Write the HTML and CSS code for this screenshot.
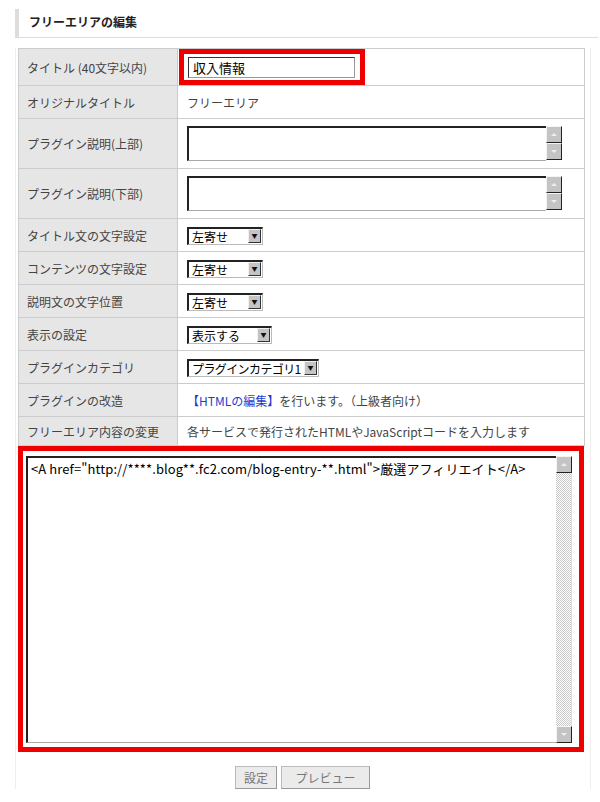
FILE: index.html
```html
<!DOCTYPE html>
<html lang="ja">
<head>
  <meta charset="UTF-8" />
  <title>フリーエリアの編集</title>
  <link rel="stylesheet" href="styles.css">
</head>
<body>
  <h2 class="page-title">フリーエリアの編集</h2>

  <div class="frame">
    <table class="form-table">
      <tr class="row-title">
        <th>タイトル (40文字以内)</th>
        <td class="tight">
          <span class="mark">
            <input type="text" class="title-input" value="収入情報" />
          </span>
        </td>
      </tr>
      <tr class="row-std">
        <th>オリジナルタイトル</th>
        <td>フリーエリア</td>
      </tr>
      <tr class="row-memo">
        <th>プラグイン説明(上部)</th>
        <td>
          <div class="memo">
            <textarea></textarea>
            <div class="scroll">
              <span class="sbtn up"></span>
              <span class="sbtn down"></span>
            </div>
          </div>
        </td>
      </tr>
      <tr class="row-memo">
        <th>プラグイン説明(下部)</th>
        <td>
          <div class="memo">
            <textarea></textarea>
            <div class="scroll">
              <span class="sbtn up"></span>
              <span class="sbtn down"></span>
            </div>
          </div>
        </td>
      </tr>
      <tr class="row-std">
        <th>タイトル文の文字設定</th>
        <td><span class="select w-align"><select><option>左寄せ</option></select></span></td>
      </tr>
      <tr class="row-std">
        <th>コンテンツの文字設定</th>
        <td><span class="select w-align"><select><option>左寄せ</option></select></span></td>
      </tr>
      <tr class="row-std">
        <th>説明文の文字位置</th>
        <td><span class="select w-align"><select><option>左寄せ</option></select></span></td>
      </tr>
      <tr class="row-std">
        <th>表示の設定</th>
        <td><span class="select w-show"><select><option>表示する</option></select></span></td>
      </tr>
      <tr class="row-std">
        <th>プラグインカテゴリ</th>
        <td><span class="select w-cat"><select><option>プラグインカテゴリ1</option></select></span></td>
      </tr>
      <tr class="row-std">
        <th>プラグインの改造</th>
        <td><a href="#" class="edit-link">【HTMLの編集】</a>を行います。（上級者向け）</td>
      </tr>
      <tr class="row-last">
        <th>フリーエリア内容の変更</th>
        <td>各サービスで発行されたHTMLやJavaScriptコードを入力します</td>
      </tr>
    </table>

    <div class="code-box">
      <div class="code-area">
        <textarea>&lt;A href=&quot;http://****.blog**.fc2.com/blog-entry-**.html&quot;&gt;厳選アフィリエイト&lt;/A&gt;</textarea>
        <div class="scroll track">
          <span class="sbtn up"></span>
          <span class="rail"></span>
          <span class="sbtn down"></span>
        </div>
      </div>
    </div>

    <div class="actions">
      <button class="btn">設定</button>
      <button class="btn btn-wide">プレビュー</button>
    </div>
  </div>
</body>
</html>
```

FILE: styles.css
```css
:root {
  --text: #444444;
  --line: #cccccc;
  --label-bg: #e6e6e6;
  --mark: #ee0000;
  --link: #1a3fd0;
  --btn-face: #c4c4c4;
}

body {
  margin: 0;
  background: #ffffff;
  color: var(--text);
  font-family: "Noto Sans CJK JP", "Liberation Sans", sans-serif;
  font-size: 12px;
}

.page-title {
  margin: 9px 2px 0 15px;
  height: 28px;
  line-height: 25px;
  padding-left: 10px;
  border-left: 4px solid #dddddd;
  border-bottom: 1px solid #dddddd;
  font-size: 12px;
  font-weight: bold;
  color: #222222;
}

.frame {
  margin: 10px 9px 0 15px;
  padding: 0 5px 0 2px;
  border-left: 1px solid #eeeeee;
  border-right: 1px solid #eeeeee;
}

.form-table {
  width: 567px;
  border-collapse: collapse;
}

.form-table th,
.form-table td {
  border: 1px solid var(--line);
  text-align: left;
  vertical-align: middle;
  font-weight: normal;
  padding: 0 9px;
}

.form-table th {
  width: 141px;
  padding-left: 8px;
  background: var(--label-bg);
  color: var(--text);
}

.row-title th { height: 36px; }
.row-std th { height: 32px; }
.row-memo th { height: 49px; }
.row-last th { height: 28px; }

.form-table td.tight {
  padding: 0 0 0 1px;
}

.mark {
  display: inline-block;
  border: 5px solid var(--mark);
  padding: 3px 5px 2px 4px;
  margin-top: -1px;
  vertical-align: middle;
}

.title-input {
  display: block;
  box-sizing: border-box;
  width: 167px;
  height: 21px;
  margin: 0;
  padding: 1px 4px 0;
  border: 1px solid #999999;
  border-top-color: #333333;
  border-left-color: #333333;
  font-family: inherit;
  font-size: 13px;
  color: #000000;
  outline: none;
}

/* textarea with a hand-drawn scroll bar */
.memo,
.code-area {
  display: flex;
}

.memo textarea,
.code-area textarea {
  box-sizing: border-box;
  margin: 0;
  border: 1px solid #aaaaaa;
  border-top: 2px solid #222222;
  border-left: 2px solid #222222;
  border-right: none;
  resize: none;
  overflow: hidden;
  outline: none;
  font-family: inherit;
  color: #000000;
}

.memo textarea {
  width: 359px;
  height: 35px;
}

.scroll {
  display: flex;
  flex-direction: column;
  width: 16px;
}

.sbtn {
  position: relative;
  box-sizing: border-box;
  height: 17px;
  background: var(--btn-face);
  border: 1px solid #f4f4f4;
  border-right-color: #222222;
  border-bottom-color: #222222;
}

.sbtn::after {
  content: "";
  position: absolute;
  left: 4px;
  top: 6px;
  border-left: 3px solid transparent;
  border-right: 3px solid transparent;
}

.sbtn.up::after {
  border-bottom: 3px solid #eeeeee;
}

.sbtn.down::after {
  border-top: 3px solid #eeeeee;
}

/* select boxes */
.select {
  position: relative;
  display: inline-block;
  vertical-align: middle;
}

.select select {
  appearance: none;
  -webkit-appearance: none;
  box-sizing: border-box;
  height: 18px;
  margin: 0;
  padding: 0 0 0 3px;
  border: 1px solid #bbbbbb;
  border-top: 2px solid #222222;
  border-left: 2px solid #222222;
  border-radius: 0;
  background: #ffffff;
  font-family: inherit;
  font-size: 12px;
  line-height: 15px;
  color: #000000;
}

.select::after {
  content: "▼";
  position: absolute;
  right: 2px;
  top: 2px;
  box-sizing: border-box;
  width: 13px;
  height: 14px;
  background: var(--btn-face);
  border: 1px solid #f0f0f0;
  border-right-color: #333333;
  border-bottom-color: #333333;
  font-size: 6px;
  line-height: 12px;
  text-align: center;
  color: #111111;
}

.w-align select { width: 76px; }
.w-show select { width: 85px; }
.w-cat select {
  width: 132px;
  letter-spacing: -0.6px;
}

.edit-link {
  color: var(--link);
  text-decoration: none;
}

/* free area code box */
.code-box {
  width: 566px;
  box-sizing: border-box;
  margin-top: 0;
  padding: 5px 6px 4px 3px;
  border: 5px solid var(--mark);
}

.code-area textarea {
  width: 530px;
  height: 287px;
  padding: 1px 3px;
  font-size: 13px;
  letter-spacing: 0.1px;
}

.code-area .scroll {
  height: 287px;
}

.rail {
  flex: 1;
  background: repeating-conic-gradient(#c8c8c8 0 25%, #ffffff 0 50%) 0 0 / 2px 2px;
  border-right: 1px solid #dddddd;
}

.actions {
  display: flex;
  justify-content: center;
  gap: 4px;
  padding: 14px 0 0 2px;
}

.btn {
  height: 23px;
  width: 42px;
  padding: 0;
  background: #ebebeb;
  border: 1px solid #bbbbbb;
  border-right-color: #999999;
  border-bottom-color: #999999;
  font-family: inherit;
  font-size: 12px;
  color: #777777;
  cursor: pointer;
}

.btn-wide {
  width: 89px;
}
```
